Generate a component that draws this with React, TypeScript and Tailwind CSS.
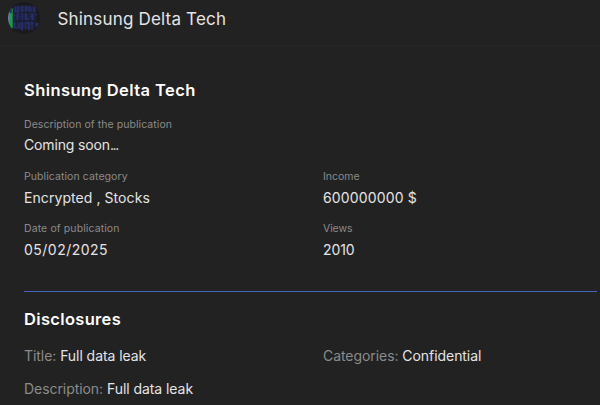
const fields = [
  { label: "Publication category", value: "Encrypted , Stocks", l: "tracking-[0.08px]", v: "tracking-[0.07px]" },
  { label: "Income", value: "600000000 $", l: "tracking-[0px]", v: "tracking-[0.15px]" },
  { label: "Date of publication", value: "05/02/2025", l: "tracking-[0.1px]", v: "tracking-[0.48px]" },
  { label: "Views", value: "2010", l: "tracking-[-0.1px]", v: "tracking-[-0.1px]" },
];

// Letter strokes of the avatar: x, y, width, height.
const glyphs = [
  [7, 5, 2, 6], [10, 4, 2, 7], [14, 4, 2, 6], [16, 5, 1, 1], [18, 4, 2, 6], [20, 5, 1, 4],
  [22, 4, 2, 6], [24, 7, 2, 1], [27, 5, 2, 6], [7, 10, 4, 1], [14, 9, 3, 1], [22, 9, 4, 1],
  [6, 13, 1, 7], [9, 12, 3, 1], [9, 13, 2, 6], [13, 12, 3, 1], [13, 15, 3, 1], [15, 12, 1, 7],
  [18, 12, 2, 7], [20, 17, 2, 2], [23, 12, 4, 1], [23, 15, 4, 1], [25, 12, 2, 7], [29, 12, 1, 3],
  [6, 21, 2, 7], [8, 27, 2, 1], [11, 22, 2, 6], [14, 21, 2, 9], [18, 21, 4, 2], [18, 21, 1, 8],
  [21, 21, 2, 9], [24, 21, 3, 2], [25, 21, 1, 9], [29, 22, 3, 4],
];

function Avatar() {
  return (
    <svg className="size-8 shrink-0" viewBox="0 0 34 34">
      <clipPath id="disc"><circle cx="17" cy="17" r="17" /></clipPath>
      <g clipPath="url(#disc)">
        <rect width="34" height="34" fill="#1b1b1e" />
        <path d="M0 10h2v16H0z" fill="#8175b5" />
        <path d="M2 7h3v21H2z" fill="#129e4c" />
        <path d="M2 7h2v5H2z" fill="#25306f" />
        {glyphs.map(([x, y, w, h], i) => (
          <rect key={i} x={x} y={y} width={w} height={h} fill="#25306f" />
        ))}
        <g fill="#25306f" opacity="0.35">
          <rect x="6" y="4" width="24" height="7" />
          <rect x="6" y="12" width="24" height="8" />
          <rect x="6" y="21" width="22" height="8" />
        </g>
      </g>
    </svg>
  );
}

export default function App() {
  return (
    <div className="h-[405px] w-[600px] overflow-hidden bg-[#222222] font-['Inter','Liberation_Sans',sans-serif] text-[#e4e4e4]">
      <header className="flex h-[46px] items-start border-b border-[#272727] pl-2 pt-0.5">
        <Avatar />
        <span className="ml-[17.5px] mt-[5px] whitespace-nowrap text-[17px] leading-6 tracking-[0.18px]">Shinsung Delta Tech</span>
      </header>
      <main className="pl-6 pr-[3px] pt-8">
        <h1 className="whitespace-nowrap text-[16.5px] font-semibold leading-6 tracking-[0.42px] text-white">Shinsung Delta Tech</h1>
        <dl className="mt-[15px]">
          <dt className="text-[10.5px] leading-4 tracking-[0.06px] text-[#8b8b8b]">Description of the publication</dt>
          <dd className="mt-[2px] text-[14px] leading-5 tracking-[-0.15px]">Coming soon<span className="tracking-[-1.4px]">...</span></dd>
        </dl>
        <div className="mt-[14px] grid grid-cols-[299px_1fr] gap-y-[13.4px]">
          {fields.map((f) => (
            <dl key={f.label}>
              <dt className={`text-[10.5px] leading-4 text-[#8b8b8b] ${f.l}`}>{f.label}</dt>
              <dd className={`mt-[3px] text-[14px] leading-5 ${f.v}`}>{f.value}</dd>
            </dl>
          ))}
        </div>
        <hr className="mt-[30.6px] border-t border-[#4565b8]" />
        <h2 className="mt-[15px] text-[16.5px] font-semibold leading-6 tracking-[0.33px] text-white">Disclosures</h2>
        <div className="mt-[15px] grid grid-cols-[299px_1fr] gap-y-[13px] text-[14px] leading-5 tracking-[-0.06px]">
          <p><span className="text-[#8b8b8b]">Title: </span>Full data leak</p>
          <p><span className="text-[#8b8b8b]">Categories: </span>Confidential</p>
          <p><span className="text-[#8b8b8b]">Description: </span>Full data leak</p>
        </div>
      </main>
    </div>
  );
}
